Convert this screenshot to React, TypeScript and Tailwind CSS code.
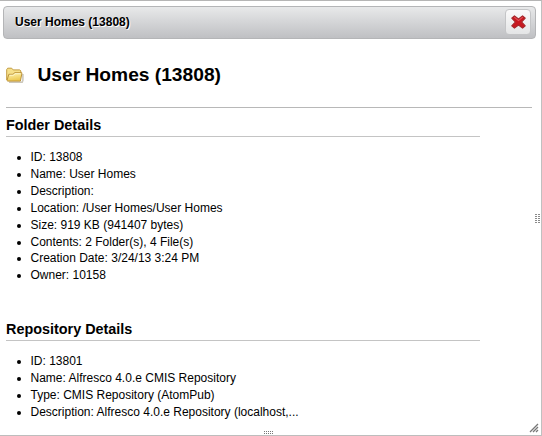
const folderDetails = [
  'ID: 13808',
  'Name: User Homes',
  'Description:',
  'Location: /User Homes/User Homes',
  'Size: 919 KB (941407 bytes)',
  'Contents: 2 Folder(s), 4 File(s)',
  'Creation Date: 3/24/13 3:24 PM',
  'Owner: 10158',
];

const repositoryDetails = [
  'ID: 13801',
  'Name: Alfresco 4.0.e CMIS Repository',
  'Type: CMIS Repository (AtomPub)',
  'Description: Alfresco 4.0.e Repository (localhost,...',
];

function FolderIcon() {
  return (
    <svg width="20" height="18" viewBox="0 0 20 18" className="shrink-0">
      <defs>
        <linearGradient id="front" x1="0" y1="0" x2="0.3" y2="1">
          <stop offset="0" stopColor="#fff6b8" />
          <stop offset="1" stopColor="#ecc850" />
        </linearGradient>
      </defs>
      <path d="M4 16.3h12.3q1.3 0 1.6-2V8" fill="none" stroke="#a8a290" strokeWidth="1.6" opacity="0.6" />
      <path d="M1.7 14V3.5L2.7 2.2h4l1.5 1.7h6.6l1 1v3" fill="#f6e08a" stroke="#c39b3f" />
      <path d="M2 14.5 3.8 8.3h4.4l1.3-1.6h7.3v1.2l-1.4 7.2H2.8z" fill="url(#front)" stroke="#bd9338" strokeLinejoin="round" />
      <path d="M4.7 9.2h4l1.3-1.5h5.7" fill="none" stroke="#fffbd8" strokeWidth="0.8" />
    </svg>
  );
}

function CloseIcon() {
  return (
    <svg width="15" height="14" viewBox="0 0 14 14" preserveAspectRatio="none">
      <path
        d="M3.2.8 7 4 10.8.8 13.3 3.2 10 7l3.3 3.8-2.5 2.4L7 10l-3.8 3.2L.7 10.8 4 7 .7 3.2z"
        fill="#c9171f"
        stroke="#a52a2d"
        strokeWidth="1"
        strokeLinejoin="round"
      />
      <path d="M3 2.2 7 5.6l4-3.4" fill="none" stroke="#e45258" strokeWidth="1" />
    </svg>
  );
}

function Details({ title, items }: { title: string; items: string[] }) {
  return (
    <section className="ml-[6px] w-[474px]">
      <h2 className="h-5 border-b border-[#c4c4c4] text-[14.4px] leading-[17px] font-bold">{title}</h2>
      <ul className="mt-[12.4px] list-disc pl-[24.5px] text-[12px] leading-[16.85px]">
        {items.map((item) => (
          <li key={item} className="whitespace-nowrap">{item}</li>
        ))}
      </ul>
    </section>
  );
}

export default function App() {
  return (
    <div className="relative h-[436px] w-[542px] overflow-hidden border-t border-r border-t-[#b5b5b5] border-r-[#c0c0c0] bg-white font-['Liberation_Sans',Arial,sans-serif] text-black">
      <header className="mt-[5px] ml-[3px] flex h-[33px] w-[533px] items-center justify-between rounded-[4px] border border-[#b4b5b7] bg-linear-to-b from-[#e8e9ea] to-[#bfc0c3] pr-1 pb-[2px] pl-[11px]">
        <h1 className="text-[12px] leading-4 font-bold [text-shadow:1px_1px_0_#fff]">User Homes (13808)</h1>
        <button aria-label="Close" className="flex h-[26px] w-[26px] items-center justify-center rounded-[4px] border border-[#c4c5c7] bg-linear-to-b from-[#fafafa] to-[#e4e5e6]">
          <CloseIcon />
        </button>
      </header>

      <div className="mt-[22px] ml-[5px] flex h-[28px] items-center">
        <FolderIcon />
        <span className="ml-[12.5px] text-[19.2px] leading-6 font-bold">User Homes (13808)</span>
      </div>
      <hr className="mt-[18px] mb-[9px] ml-[6px] w-[526px] border-t border-[#b8b8b8]" />

      <Details title="Folder Details" items={folderDetails} />
      <div className="h-[36.8px]" />
      <Details title="Repository Details" items={repositoryDetails} />

      <svg className="absolute top-[213px] left-[535px]" width="5" height="10" viewBox="0 0 5 10">
        <path d="M1 0v10M4 0v10" stroke="#8a8a8a" strokeWidth="2" strokeDasharray="1 1" />
      </svg>
      <svg className="absolute top-[429px] left-[263px]" width="12" height="6" viewBox="0 0 12 6">
        <path d="M1 1.5h10M1 3.5h10" stroke="#777" strokeWidth="1" strokeDasharray="1 1" />
      </svg>
      <svg className="absolute top-[422px] left-[529px]" width="10" height="10" viewBox="0 0 10 10">
        <path d="M1 9 9 1M4 9l5-5M7 9l2-2" stroke="#777" strokeWidth="1.3" />
      </svg>
      <div className="absolute bottom-0 left-0 h-px w-full bg-[#bdbdbd]" />
    </div>
  );
}
